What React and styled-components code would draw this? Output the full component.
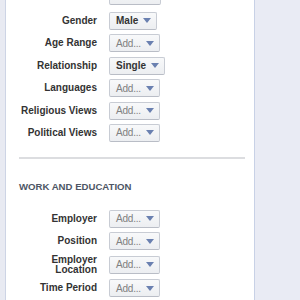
import React from "react";
import styled, { createGlobalStyle } from "styled-components";

const GlobalStyle = createGlobalStyle`
  html, body {
    margin: 0;
    padding: 0;
    background: #e9ebf3;
  }
  body {
    font-family: "Liberation Sans", Arial, sans-serif;
  }
`;

const personal = [
  { label: "", value: "", blank: true },
  { label: "Gender", value: "Male" },
  { label: "Age Range" },
  { label: "Relationship", value: "Single" },
  { label: "Languages" },
  { label: "Religious Views" },
  { label: "Political Views" },
];

const work = [
  { label: "Employer" },
  { label: "Position" },
  { label: "Employer Location", lines: ["Employer", "Location"] },
  { label: "Time Period" },
  { label: "", blank: true },
];

function Dropdown({ value, blank }) {
  if (blank) return <Button $blank />;
  return (
    <Button>
      <ButtonText $filled={!!value}>{value || "Add..."}</ButtonText>
      <Arrow />
    </Button>
  );
}

function FieldRow({ item }) {
  return (
    <Row>
      <Label>
        {item.lines
          ? item.lines.map((l) => <span key={l}>{l}</span>)
          : item.label}
      </Label>
      <Dropdown value={item.value} blank={item.blank} />
    </Row>
  );
}

export default function App() {
  return (
    <Page>
      <GlobalStyle />
      <LeftStrip />
      <Main>
        <FieldList $top>
          {personal.map((item, i) => (
            <FieldRow key={i} item={item} />
          ))}
        </FieldList>
        <Divider />
        <Heading>Work and Education</Heading>
        <FieldList>
          {work.map((item, i) => (
            <FieldRow key={i} item={item} />
          ))}
        </FieldList>
      </Main>
      <SidePanel />
    </Page>
  );
}

const Page = styled.div`
  display: flex;
  width: 300px;
  height: 300px;
  overflow: hidden;
  background: #e9ebf3;
`;

const LeftStrip = styled.div`
  width: 5px;
  flex: none;
  background: #e8eaf2;
  border-right: 1px solid #cdd4e5;
`;

const SidePanel = styled.div`
  flex: 1;
  background: #e9ebf4;
  border-left: 1px solid #c8d1e6;
`;

const Main = styled.div`
  width: 248px;
  flex: none;
  background: #fff;
  padding: 0 9px 0 13px;
  box-sizing: border-box;
  display: flex;
  flex-direction: column;
`;

const FieldList = styled.div`
  display: flex;
  flex-direction: column;
  gap: 4.4px;
  margin-top: ${(p) => (p.$top ? "-13px" : "0")};

  & > div:first-child {
    margin-bottom: ${(p) => (p.$top ? "2.6px" : "0")};
  }
`;

const Row = styled.div`
  display: grid;
  grid-template-columns: 78px auto;
  column-gap: 12px;
  align-items: center;
  justify-items: start;
  min-height: 18px;
`;

const Label = styled.div`
  justify-self: end;
  display: flex;
  flex-direction: column;
  align-items: flex-end;
  font-size: 10px;
  line-height: 10px;
  font-weight: bold;
  color: #333;
  white-space: nowrap;
`;

const Button = styled.div`
  display: inline-flex;
  align-items: center;
  gap: 5px;
  box-sizing: border-box;
  height: 18px;
  width: ${(p) => (p.$blank ? "52px" : "auto")};
  padding: 0 5px 0 6px;
  border: 1px solid #c8ccd4;
  border-bottom-color: #b9bdc6;
  border-radius: 2px;
  background: linear-gradient(#f8f9fa, #eceef1);
`;

const ButtonText = styled.span`
  font-size: 10px;
  font-weight: ${(p) => (p.$filled ? "bold" : "normal")};
  color: ${(p) => (p.$filled ? "#333" : "#808080")};
  letter-spacing: ${(p) => (p.$filled ? "0" : "-0.2px")};
`;

const Arrow = styled.span`
  width: 0;
  height: 0;
  border-left: 4.5px solid transparent;
  border-right: 4.5px solid transparent;
  border-top: 5px solid #6a80b0;
`;

const Divider = styled.div`
  flex: none;
  height: 2px;
  background: #dcdde0;
  margin-top: 15px;
`;

const Heading = styled.div`
  margin: 22px 0 17px;
  font-size: 9.6px;
  line-height: 12px;
  font-weight: bold;
  text-transform: uppercase;
  color: #4e5665;
`;
